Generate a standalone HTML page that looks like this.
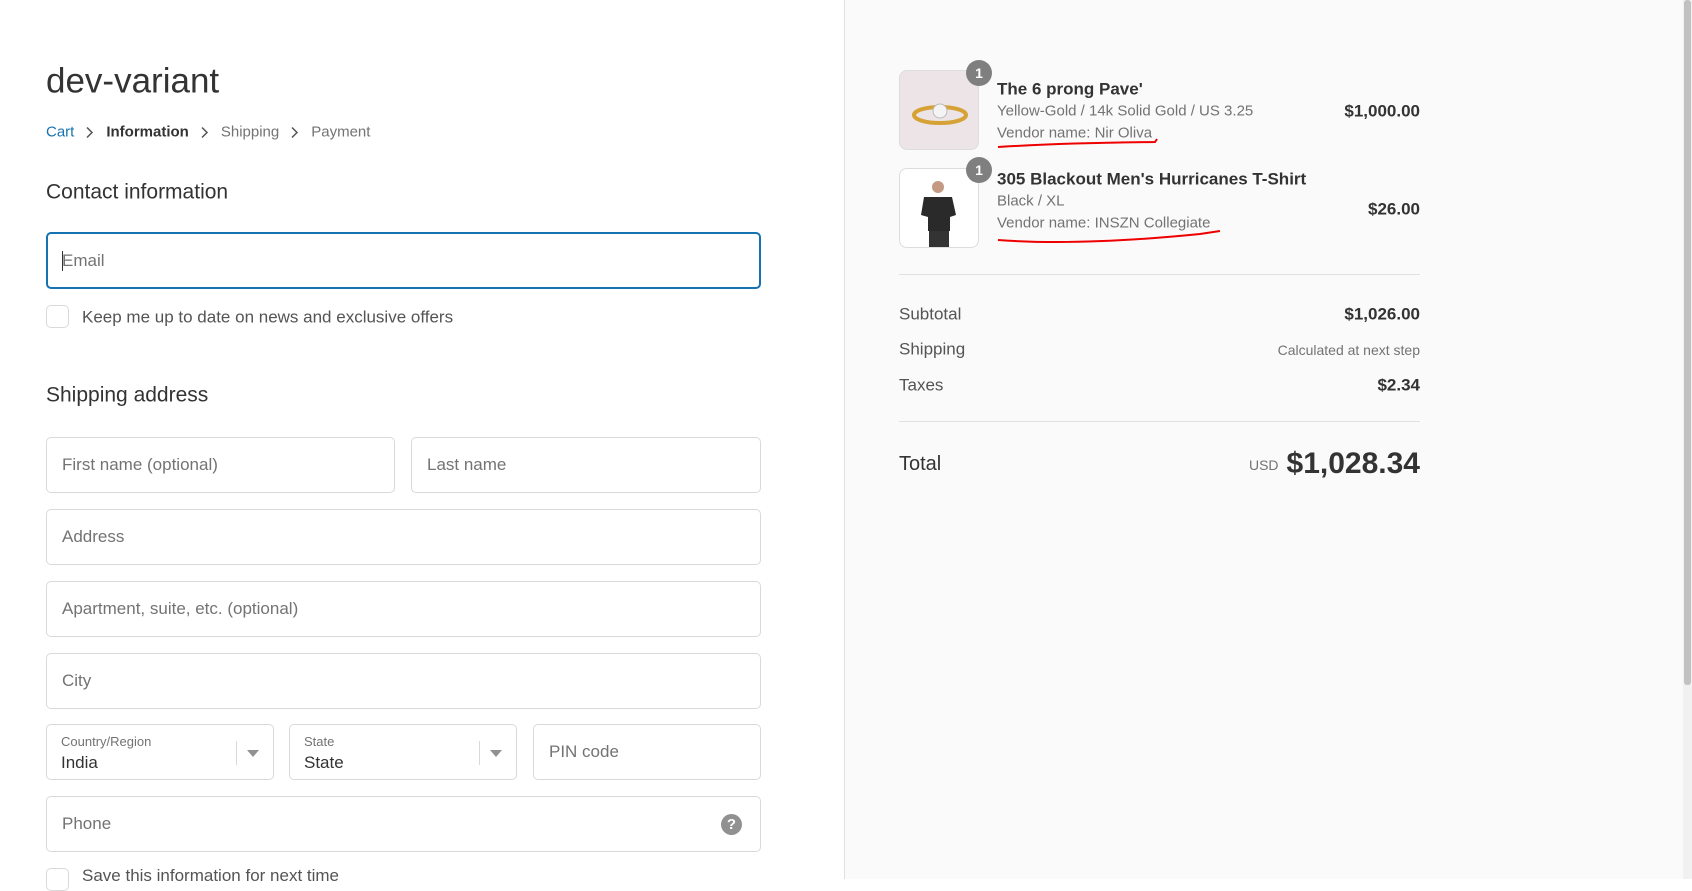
<!DOCTYPE html>
<html><head><meta charset="utf-8"><style>
*{margin:0;padding:0;box-sizing:border-box}
body{width:1692px;height:879px;overflow:hidden;background:#fff;font-family:"Liberation Sans",sans-serif;color:#333;position:relative}
.a{position:absolute;white-space:nowrap}
.f{position:absolute;border:1px solid #d9d9d9;border-radius:5px;background:#fff}
.ph{position:absolute;left:15px;top:50%;transform:translateY(-50%);font-size:17px;color:#737373}
.c{line-height:1;transform:translateY(-50%)}
.r{text-align:right}
.chev{display:inline-block;vertical-align:middle;margin:0 12px}
</style></head><body>
<div class="a" style="left:844px;top:0;width:839px;height:879px;background:#fafafa;border-left:1px solid #e1e1e1"></div>
<div class="a" style="left:1683px;top:0;width:9px;height:879px;background:#f1f1f1"></div>
<div class="a" style="left:1684px;top:0;width:7px;height:685px;background:#c1c1c1;border-radius:3px"></div>

<div class="a c" style="left:46px;top:81px;font-size:35px;color:#333">dev-variant</div>
<div class="a c" style="left:46px;top:132px;font-size:15px;color:#737373">
<span style="color:#1773b0">Cart</span><svg class="chev" width="8" height="12"><path d="M1 1 L6 6 L1 11" fill="none" stroke="#555" stroke-width="1.5"/></svg><span style="color:#333;font-weight:bold">Information</span><svg class="chev" width="8" height="12"><path d="M1 1 L6 6 L1 11" fill="none" stroke="#555" stroke-width="1.5"/></svg>Shipping<svg class="chev" width="8" height="12"><path d="M1 1 L6 6 L1 11" fill="none" stroke="#555" stroke-width="1.5"/></svg>Payment</div>
<div class="a c" style="left:46px;top:192px;font-size:21px">Contact information</div>
<div class="f" style="left:46px;top:232px;width:715px;height:57px;border:2px solid #1773b0"><span class="ph" style="left:14px">Email</span><span class="a" style="left:14px;top:17px;width:1px;height:20px;background:#333"></span></div>
<div class="f" style="left:46px;top:305px;width:23px;height:23px"></div>
<div class="a c" style="left:82px;top:317px;font-size:17px;color:#545454">Keep me up to date on news and exclusive offers</div>
<div class="a c" style="left:46px;top:395px;font-size:21px">Shipping address</div>
<div class="f" style="left:46px;top:437px;width:349px;height:56px"><span class="ph">First name (optional)</span></div>
<div class="f" style="left:411px;top:437px;width:350px;height:56px"><span class="ph">Last name</span></div>
<div class="f" style="left:46px;top:509px;width:715px;height:56px"><span class="ph">Address</span></div>
<div class="f" style="left:46px;top:581px;width:715px;height:56px"><span class="ph">Apartment, suite, etc. (optional)</span></div>
<div class="f" style="left:46px;top:653px;width:715px;height:56px"><span class="ph">City</span></div>
<div class="f" style="left:46px;top:724px;width:228px;height:56px">
<span class="a" style="left:14px;top:9px;font-size:13px;color:#737373">Country/Region</span>
<span class="a" style="left:14px;top:28px;font-size:17px;color:#333">India</span>
<span class="a" style="left:189px;top:16px;width:1px;height:24px;background:#d9d9d9"></span>
<span class="a" style="left:200px;top:25px;border-left:6px solid transparent;border-right:6px solid transparent;border-top:7px solid #919191"></span></div>
<div class="f" style="left:289px;top:724px;width:228px;height:56px">
<span class="a" style="left:14px;top:9px;font-size:13px;color:#737373">State</span>
<span class="a" style="left:14px;top:28px;font-size:17px;color:#333">State</span>
<span class="a" style="left:189px;top:16px;width:1px;height:24px;background:#d9d9d9"></span>
<span class="a" style="left:200px;top:25px;border-left:6px solid transparent;border-right:6px solid transparent;border-top:7px solid #919191"></span></div>
<div class="f" style="left:533px;top:724px;width:228px;height:56px"><span class="ph">PIN code</span></div>
<div class="f" style="left:46px;top:796px;width:715px;height:56px"><span class="ph">Phone</span>
<span class="a" style="left:674px;top:17px;width:21px;height:21px;border-radius:50%;background:#919191;color:#fff;font-size:15px;font-weight:bold;text-align:center;line-height:21px">?</span></div>
<div class="f" style="left:46px;top:868px;width:23px;height:23px"></div>
<div class="a" style="left:82px;top:866px;font-size:17px;color:#545454;line-height:20px">Save this information for next time</div>

<!-- right -->
<div class="a" style="left:899px;top:70px;width:80px;height:80px;border:1px solid #ddd;border-radius:8px;background:#ece4e6;overflow:hidden">
<svg width="80" height="80"><ellipse cx="40" cy="44" rx="26" ry="8" fill="none" stroke="#d6a236" stroke-width="4"/><circle cx="40" cy="40" r="7" fill="#f4f4f4" stroke="#bbb"/></svg></div>
<div class="a" style="left:966px;top:60px;width:26px;height:26px;border-radius:50%;background:#7f7f7f;color:#fff;font-size:14px;font-weight:bold;text-align:center;line-height:26px">1</div>
<div class="a" style="left:899px;top:168px;width:80px;height:80px;border:1px solid #ddd;border-radius:8px;background:#fff;overflow:hidden">
<svg width="80" height="80"><circle cx="38" cy="18" r="6" fill="#c49a82"/><path d="M24 28 L52 28 L56 46 L50 48 L50 62 L28 62 L28 48 L21 46 Z" fill="#2a2a2a"/><rect x="29" y="62" width="20" height="18" fill="#333"/></svg></div>
<div class="a" style="left:966px;top:157px;width:26px;height:26px;border-radius:50%;background:#7f7f7f;color:#fff;font-size:14px;font-weight:bold;text-align:center;line-height:26px">1</div>

<div class="a c" style="left:997px;top:89px;font-size:17px;font-weight:bold;color:#333">The 6 prong Pave'</div>
<div class="a c" style="left:997px;top:111px;font-size:15px;color:#737373">Yellow-Gold / 14k Solid Gold / US 3.25</div>
<div class="a c" style="left:997px;top:133px;font-size:15px;color:#737373">Vendor name: Nir Oliva</div>
<div class="a c r" style="right:272px;top:111px;font-size:17px;font-weight:bold">$1,000.00</div>
<div class="a c" style="left:997px;top:179px;font-size:17px;font-weight:bold;color:#333">305 Blackout Men's Hurricanes T-Shirt</div>
<div class="a c" style="left:997px;top:201px;font-size:15px;color:#737373">Black / XL</div>
<div class="a c" style="left:997px;top:223px;font-size:15px;color:#737373">Vendor name: INSZN Collegiate</div>
<div class="a c r" style="right:272px;top:209px;font-size:17px;font-weight:bold">$26.00</div>
<svg class="a" style="left:0;top:0" width="1692" height="300"><path d="M998 147 Q1060 143 1155 142 L1157 139" fill="none" stroke="#e00" stroke-width="2"/><path d="M998 240 Q1080 246 1200 234 L1220 231" fill="none" stroke="#e00" stroke-width="2"/></svg>

<div class="a" style="left:899px;top:274px;width:521px;height:1px;background:#e1e1e1"></div>
<div class="a c" style="left:899px;top:314px;font-size:17px;color:#545454">Subtotal</div>
<div class="a c r" style="right:272px;top:314px;font-size:17px;font-weight:bold">$1,026.00</div>
<div class="a c" style="left:899px;top:349px;font-size:17px;color:#545454">Shipping</div>
<div class="a c r" style="right:272px;top:350px;font-size:14px;color:#737373">Calculated at next step</div>
<div class="a c" style="left:899px;top:385px;font-size:17px;color:#545454">Taxes</div>
<div class="a c r" style="right:272px;top:385px;font-size:17px;font-weight:bold">$2.34</div>
<div class="a" style="left:899px;top:421px;width:521px;height:1px;background:#e1e1e1"></div>
<div class="a c" style="left:899px;top:464px;font-size:20px;color:#333">Total</div>
<div class="a c r" style="right:272px;top:464px;font-size:30px;font-weight:bold;color:#333"><span style="font-size:14px;font-weight:normal;color:#737373;vertical-align:middle;margin-right:8px">USD</span>$1,028.34</div>
</body></html>
